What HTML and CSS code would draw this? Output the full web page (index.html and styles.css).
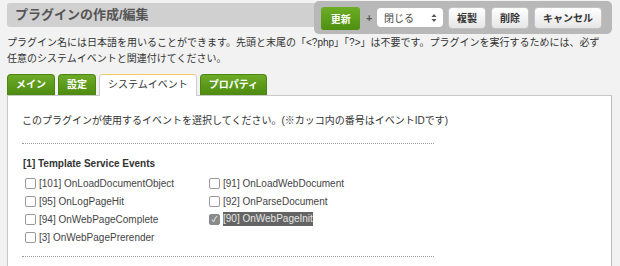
FILE: index.html
```html
<!DOCTYPE html>
<html lang="ja">
<head>
    <meta charset="UTF-8">
    <title>プラグインの作成/編集</title>
    <link rel="stylesheet" href="styles.css">
</head>
<body>
    <div class="page-head">
        <h1>プラグインの作成/編集</h1>
        <div class="toolbar">
            <button class="btn btn-save">更新</button>
            <span class="plus">+</span>
            <div class="select">
                <span>閉じる</span>
                <svg width="6" height="10" viewBox="0 0 6 10"><path d="M3 1 L5.5 4 H0.5 Z M3 9 L5.5 6 H0.5 Z" fill="#555"/></svg>
            </div>
            <button class="btn">複製</button>
            <button class="btn">削除</button>
            <button class="btn">キャンセル</button>
        </div>
    </div>

    <p class="intro">プラグイン名には日本語を用いることができます。先頭と末尾の「&lt;?php」「?&gt;」は不要です。プラグインを実行するためには、必ず<br>任意のシステムイベントと関連付けてください。</p>

    <div class="tabs">
        <div class="tab">メイン</div>
        <div class="tab">設定</div>
        <div class="tab active">システムイベント</div>
        <div class="tab">プロパティ</div>
    </div>

    <div class="panel">
        <p class="lead">このプラグインが使用するイベントを選択してください。(※カッコ内の番号はイベントIDです)</p>
        <div class="group">
            <h3>[1] Template Service Events</h3>
            <div class="events">
                <label class="event"><span class="check"></span>[101] OnLoadDocumentObject</label>
                <label class="event"><span class="check"></span>[91] OnLoadWebDocument</label>
                <label class="event"><span class="check"></span>[95] OnLogPageHit</label>
                <label class="event"><span class="check"></span>[92] OnParseDocument</label>
                <label class="event"><span class="check"></span>[94] OnWebPageComplete</label>
                <label class="event"><span class="check checked">✓</span><span class="selected">[90] OnWebPageInit</span></label>
                <label class="event"><span class="check"></span>[3] OnWebPagePrerender</label>
            </div>
        </div>
    </div>
</body>
</html>
```

FILE: styles.css
```css
body {
    margin: 0;
    padding: 0 8px 0 7px;
    background: #f2f2f2;
    font-family: "Liberation Sans", "Noto Sans CJK JP", sans-serif;
    font-size: 10px;
    color: #333;
}
.page-head {
    display: flex;
    align-items: flex-start;
    height: 24px;
    margin-top: 3px;
    background: #d0d0d0;
    border-radius: 3px;
}
h1 {
    margin: 0;
    padding-left: 8px;
    font-size: 13px;
    line-height: 24px;
    color: #555;
}
.toolbar {
    display: flex;
    align-items: center;
    margin: -2px 0 0 auto;
    height: 33px;
    padding: 0 10px 0 7px;
    background: #b8b8b8;
    border-radius: 5px;
}
.btn {
    height: 22px;
    margin-left: 5px;
    padding: 0 8px;
    font-family: inherit;
    font-size: 10px;
    font-weight: bold;
    color: #333;
    background: linear-gradient(#ffffff, #e6e6e6);
    border: 1px solid #c4c4c4;
    border-radius: 4px;
}
.btn-save {
    width: 39px;
    height: 23px;
    margin: 2px 0 0 0;
    color: #fff;
    background: linear-gradient(#6cae25, #4f8f10);
    border: none;
    border-radius: 3px;
}
.plus {
    margin: 2px 5px 0 6px;
    font-weight: bold;
    color: #555;
}
.select {
    display: flex;
    align-items: center;
    justify-content: space-between;
    width: 66px;
    height: 19px;
    box-sizing: border-box;
    padding: 0 6px 0 7px;
    background: #fff;
    border-radius: 4px;
    color: #444;
}
.intro {
    margin: 8px 0 0;
    line-height: 16px;
}
.tabs {
    display: flex;
    gap: 3px;
    margin-top: 7px;
}
.tab {
    height: 20px;
    padding: 0 8px;
    line-height: 20px;
    font-weight: bold;
    color: #fff;
    background: linear-gradient(#6dab27, #4d8a10);
    border: 1px solid #4d8512;
    border-bottom: none;
    border-radius: 4px 4px 0 0;
}
.tab.active {
    margin-bottom: -1px;
    height: 21px;
    font-weight: normal;
    color: #333;
    background: #fff;
    border-color: #ccc;
    border-top: 1px solid #f2cc6a;
}
.panel {
    background: #fff;
    border: 1px solid #c8c8c8;
    border-right-color: #bbb;
    border-bottom: none;
    padding: 17px 14px 9px;
}
.lead {
    margin: 0;
    line-height: 16px;
}
.group {
    width: 412px;
    margin-top: 14px;
    border-top: 1px dotted #999;
    border-bottom: 1px dotted #999;
    padding: 12px 0 10px;
}
h3 {
    margin: 0 0 2px 1px;
    font-size: 10px;
    line-height: 16px;
    color: #333;
}
.events {
    display: grid;
    grid-template-columns: 184px 184px;
}
.event {
    display: flex;
    align-items: center;
    height: 18px;
    padding-left: 3px;
    color: #444;
}
.check {
    width: 9px;
    height: 9px;
    margin-right: 3px;
    border: 1px solid #999;
    border-radius: 2px;
    background: #fff;
    font-size: 8px;
    line-height: 9px;
    text-align: center;
    color: #fff;
}
.check.checked {
    background: #8a8a8a;
    border-color: #8a8a8a;
}
.selected {
    background: #646464;
    color: #e6e6e6;
    line-height: 14px;
}
```
